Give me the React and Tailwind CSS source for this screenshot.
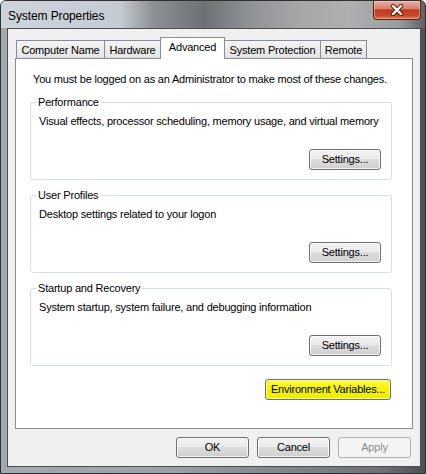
import React from "react";

const tabs = [
  { label: "Computer Name", w: "w-[89px]" },
  { label: "Hardware", w: "w-[57px]" },
  { label: "Advanced", w: "w-[65px]", active: true },
  { label: "System Protection", w: "w-[97px]" },
  { label: "Remote", w: "w-[47px]" },
];

const groups = [
  {
    title: "Performance",
    text: "Visual effects, processor scheduling, memory usage, and virtual memory",
  },
  { title: "User Profiles", text: "Desktop settings related to your logon" },
  {
    title: "Startup and Recovery",
    text: "System startup, system failure, and debugging information",
  },
];

function WinButton({ children, className = "", disabled = false, highlight = false }) {
  const skin = disabled
    ? "border-[#adb2b5] bg-[#f4f4f4] text-[#8d8d8d]"
    : highlight
    ? "border-[#707070] bg-[linear-gradient(#fbfb48,#f3f300_50%,#ecec00)] text-black shadow-[inset_0_0_0_1px_rgba(255,255,160,0.8)]"
    : "border-[#707070] bg-[linear-gradient(#f2f2f2_0%,#ebebeb_50%,#dddddd_50%,#cfcfcf_100%)] text-black shadow-[inset_0_0_0_1px_rgba(255,255,255,0.75)]";
  return (
    <button
      disabled={disabled}
      className={`h-[21px] whitespace-nowrap rounded-[3px] border text-[11px] leading-none ${skin} ${className}`}
    >
      {children}
    </button>
  );
}

function GroupBox({ title, text }) {
  return (
    <fieldset className="ml-[14px] w-[362px] min-w-0 rounded-[3px] border border-[#d5dfe5]">
      <legend className="ml-[5px] px-[2px] leading-[14px]">{title}</legend>
      <div className="flex h-[70px] flex-col pb-[9px] pl-[8px] pr-[10px] pt-[5px]">
        <p className="whitespace-nowrap leading-[14px]">{text}</p>
        <WinButton className="mt-auto w-[72px] self-end">Settings...</WinButton>
      </div>
    </fieldset>
  );
}

function CloseButton() {
  return (
    <div className="flex h-[19px] w-[48px] items-center justify-center rounded-b-[4px] border border-t-0 border-[#5a1d12] bg-[linear-gradient(#eab0a2_0%,#d7816b_42%,#c2391d_50%,#c64a2a_80%,#dc7a52_100%)] shadow-[inset_0_0_0_1px_rgba(255,220,210,0.45)]">
      <svg width="14" height="12" viewBox="0 0 14 12">
        <path d="M3 2 L11 10 M11 2 L3 10" stroke="#5b1a10" strokeWidth="4.2" strokeLinecap="round" />
        <path d="M3 2 L11 10 M11 2 L3 10" stroke="#ffffff" strokeWidth="2.4" strokeLinecap="round" />
      </svg>
    </div>
  );
}

export default function App() {
  return (
    <div className="flex h-[474px] w-[426px] flex-col rounded-t-[6px] border border-[#2e3033] bg-[linear-gradient(to_right,#a3a9af,#9aa0a6_40%,#6c7075_90%,#4c4f53)] font-['Liberation_Sans',Arial,sans-serif] text-[11px] tracking-[-0.2px] text-black">
      {/* glass caption */}
      <div className="flex h-[27px] shrink-0 items-start justify-between rounded-t-[5px] bg-[linear-gradient(to_right,#cdd4db_0%,#c4cbd2_28%,#8c9094_36%,#6d7074_48%,#8e9194_58%,#a4a6a8_70%,#adafb1_82%,#9a9c9f_94%,#5d6064_100%)]">
        <span className="pl-[7px] pt-[8px] text-[12px] leading-[14px] tracking-[-0.1px] text-black">System Properties</span>
        <div className="mr-[4px]">
          <CloseButton />
        </div>
      </div>

      <div className="flex flex-1 pb-[6px] pl-[6px] pr-[4px]">
        <div className="flex flex-1 flex-col border border-[#4b4f54] bg-[#f0f0f0]">
          {/* tab strip */}
          <div className="ml-[8px] mt-[8px] flex h-[21px] items-end">
            {tabs.map((t, i) =>
              t.active ? (
                <div
                  key={t.label}
                  className={`${t.w} relative z-10 -mb-px -ml-px flex h-[22px] items-center justify-center whitespace-nowrap border border-b-0 border-[#898c95] bg-white pb-[3px] leading-[14px]`}
                >
                  {t.label}
                </div>
              ) : (
                <div
                  key={t.label}
                  className={`${t.w} ${i === 0 ? "" : "-ml-px"} flex h-[18px] items-center justify-center whitespace-nowrap border border-b-0 border-[#898c95] bg-[linear-gradient(#f4f4f4,#e4e4e4)] leading-[14px]`}
                >
                  {t.label}
                </div>
              )
            )}
          </div>

          {/* tab page */}
          <div className="mx-[7px] flex h-[371px] flex-col border border-[#898c95] bg-white">
            <p className="whitespace-nowrap pl-[17px] pt-[13px] leading-[14px]">
              You must be logged on as an Administrator to make most of these changes.
            </p>
            <div className="mt-[9px] flex flex-col gap-[8px]">
              {groups.map((g) => (
                <GroupBox key={g.title} title={g.title} text={g.text} />
              ))}
            </div>
            <WinButton highlight className="mr-[21px] mt-[13px] w-[126px] self-end">
              Environment Variables...
            </WinButton>
          </div>

          {/* dialog buttons */}
          <div className="mt-[8px] flex justify-end gap-[8px] pb-[8px] pr-[9px]">
            <WinButton className="w-[73px]">OK</WinButton>
            <WinButton className="w-[73px]">Cancel</WinButton>
            <WinButton disabled className="w-[73px]">
              Apply
            </WinButton>
          </div>
        </div>
      </div>
    </div>
  );
}
